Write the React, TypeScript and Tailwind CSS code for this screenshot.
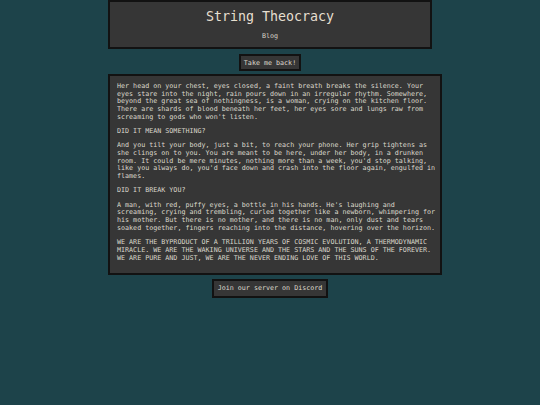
export default function App() {
  const mono = { fontFamily: '"DejaVu Sans Mono", "Liberation Mono", monospace' };
  return (
    <div className="min-h-screen w-full bg-[#1d434a]" style={mono}>
      <div className="mx-auto flex w-[324px] flex-col items-center">
        <header className="flex h-[49px] w-[324px] flex-col items-center border-2 border-[#121212] bg-[#363636]">
          <h1 className="mt-[7px] text-[13.3px] leading-[16px] text-[#e6dfd0]">String Theocracy</h1>
          <div className="mt-[7px] text-[6.7px] leading-[8px] text-[#d6d2c6]">Blog</div>
        </header>
        <button className="mt-[5px] flex h-[17px] w-[62px] items-center justify-center border-2 border-[#121212] bg-[#363636] text-[6.7px] leading-[8px] text-[#ddd8cc]">
          Take me back!
        </button>
        <main className="mt-[3px] w-[334px] self-start border-2 border-[#121212] bg-[#363636] pb-[4px] pl-[7px] pt-[7px] text-[6.7px] leading-[7.667px] text-[#dcd8cc]">
          <div className="w-[322px]">
            <p className="mb-[6.7px]">
              Her head on your chest, eyes closed, a faint breath breaks the silence. Your eyes stare into the night, rain pours down in an irregular rhythm. Somewhere, beyond the great sea of nothingness, is a woman, crying on the kitchen floor. There are shards of blood beneath her feet, her eyes sore and lungs raw from screaming to gods who won't listen.
            </p>
            <p className="mb-[6.7px]">DID IT MEAN SOMETHING?</p>
            <p className="mb-[6.7px]">
              And you tilt your body, just a bit, to reach your phone. Her grip tightens as she clings on to you. You are meant to be here, under her body, in a drunken room. It could be mere minutes, nothing more than a week, you'd stop talking, like you always do, you'd face down and crash into the floor again, engulfed in flames.
            </p>
            <p className="mb-[6.7px]">DID IT BREAK YOU?</p>
            <p className="mb-[6.7px]">
              A man, with red, puffy eyes, a bottle in his hands. He's laughing and screaming, crying and trembling, curled together like a newborn, whimpering for his mother. But there is no mother, and there is no man, only dust and tears soaked together, fingers reaching into the distance, hovering over the horizon.
            </p>
            <p className="mb-[6.7px]">
              WE ARE THE BYPRODUCT OF A TRILLION YEARS OF COSMIC EVOLUTION, A THERMODYNAMIC MIRACLE. WE ARE THE WAKING UNIVERSE AND THE STARS AND THE SUNS OF THE FOREVER. WE ARE PURE AND JUST, WE ARE THE NEVER ENDING LOVE OF THIS WORLD.
            </p>
          </div>
        </main>
        <button className="mt-[4px] flex h-[19px] w-[116px] items-center justify-center border-2 border-[#121212] bg-[#363636] text-[6.7px] leading-[8px] text-[#ddd8cc]">
          Join our server on Discord
        </button>
      </div>
    </div>
  );
}
